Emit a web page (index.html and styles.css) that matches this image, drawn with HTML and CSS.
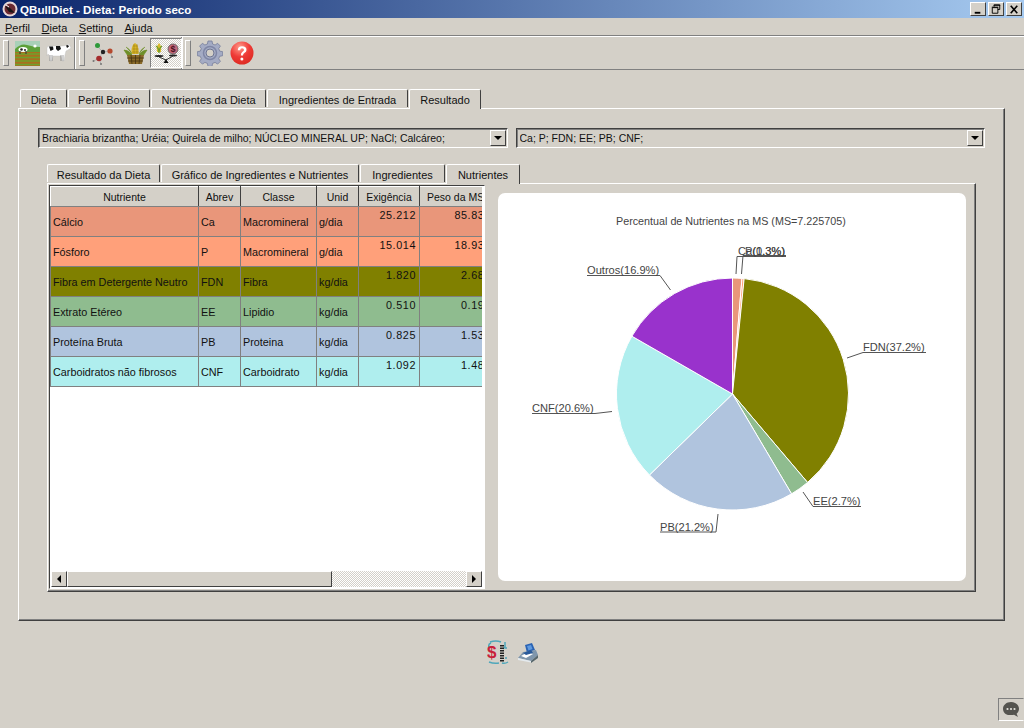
FILE: index.html
```html
<!DOCTYPE html>
<html lang="pt">
<head>
<meta charset="utf-8">
<title>QBullDiet</title>
<link rel="stylesheet" href="styles.css">
</head>
<body>
<div class="window">
  <header class="titlebar">
    <svg class="app-logo" width="16" height="16" viewBox="0 0 16 16"><circle cx="8" cy="8" r="7.500" fill="#e8d8d8"/><circle cx="8" cy="8" r="5.500" fill="#6b2a33"/><path d="M3 5l5 2 5 5-6-1z" fill="#1c1416"/><path d="M4 4l3 2" stroke="#fff" stroke-width="1"/></svg>
    <span class="title-text">QBullDiet - Dieta: Periodo seco</span>
    <div class="winbtns">
      <span class="winbtn"><svg width="15" height="13" viewBox="0 0 15 13"><rect x="4" y="9" width="6" height="2" fill="#000"/></svg></span>
      <span class="winbtn"><svg width="15" height="13" viewBox="0 0 15 13"><path d="M5.500 3.500V1.500h6v5h-2M3.500 4.500h6v6h-6z" fill="none" stroke="#000"/><path d="M3 4h7M5 2h7" stroke="#000"/></svg></span>
      <span class="winbtn winbtn-close"><svg width="15" height="13" viewBox="0 0 15 13"><path d="M4 2.500l7 8M11 2.500l-7 8" stroke="#000" stroke-width="1.700"/></svg></span>
    </div>
  </header>

  <nav class="menubar">
    <span class="menu-item"><u>P</u>erfil</span>
    <span class="menu-item"><u>D</u>ieta</span>
    <span class="menu-item"><u>S</u>etting</span>
    <span class="menu-item"><u>A</u>juda</span>
  </nav>

  <div class="toolbar">
    <div class="tool-group group-a">
      <span class="handle"></span>
      <svg class="ticon" width="25" height="25" viewBox="0 0 25 25"><rect width="25" height="8" fill="#a8d0b8"/><path d="M0 8q6-6 12-4t13 2v5H0z" fill="#5da03a"/><rect y="11" width="25" height="14" fill="#a8701f"/><path d="M0 13h25M0 16.500h25M0 20h25M0 23.500h25" stroke="#6fa02c" stroke-width="1.600"/><ellipse cx="8" cy="8.500" rx="4.500" ry="2.500" fill="#fff"/><circle cx="6.500" cy="8.500" r="1.300" fill="#222"/><circle cx="10" cy="9" r="1" fill="#222"/><path d="M5 10v3M11 10v3" stroke="#333"/><circle cx="20" cy="5" r="1.600" fill="#fff"/></svg>
      <svg class="ticon cow" width="26" height="18" viewBox="0 0 26 18"><path d="M1 4q0-2 3-2h12q3 0 5-1l2-1 1 2 1 2-3 2-2 1-1 4-1 6h-2l-1-5H7l-1 5H4l-1-6-1-1-1 2z" fill="#fff" stroke="#bbb" stroke-width=".4"/><path d="M3 2.500h4l.5 3-3 1.500zM10 2h4l1 3-3 2-2-2zM20 1.500l2-.5 1 1.500-2 1.500z" fill="#151515"/><path d="M4 11v6M6 11v6M15 11v6M17 11v6" stroke="#666" stroke-width=".6"/></svg>
    </div>
    <div class="tool-group group-b">
      <span class="handle"></span>
      <svg class="ticon" width="26" height="25" viewBox="0 0 26 25"><path d="M7 6l5 5M12 11l7-1M12 11l-4 6M8 17l-5 3M19 10l2 6M8 17l2 6" stroke="#aaa" stroke-width=".8"/><circle cx="6.500" cy="4.500" r="2.500" fill="#2f9a3a"/><circle cx="12" cy="11" r="2.200" fill="#222"/><circle cx="19" cy="10" r="2.600" fill="#b5492e"/><circle cx="8" cy="17.500" r="2.800" fill="#a52c2c"/><circle cx="2.500" cy="20" r="1" fill="#777"/><circle cx="21" cy="16" r="1" fill="#777"/><circle cx="10" cy="23" r="1" fill="#777"/></svg>
      <svg class="ticon corn-icon" width="25" height="25" viewBox="0 0 25 25"><path d="M12 2c3 2 4 6 3.500 11h-7C8 8 9 4 12 2z" fill="#d8b62a"/><path d="M10 5h5M9.500 8h6M9 11h7M11 3v10M14 3v10" stroke="#9a7a12" stroke-width=".5"/><path d="M1 9q5 0 8 5l-4 1zM24 9q-5 0-8 5l4 1zM3 6q4 2 6 7M22 6q-4 2-6 7" fill="#6f8f28" stroke="#6f8f28" stroke-width=".7"/><path d="M4 14h17l-2 9H6z" fill="#8a6a28"/><path d="M4 17h17M5 20h15M8 14l1 9M12.500 14v9M17 14l-1 9" stroke="#453212" stroke-width=".8"/></svg>
      <span class="tool-active">
        <svg width="26" height="25" viewBox="0 0 26 25"><path d="M6 2q3 3 2 9H4q-1-6 2-9z" fill="#d9bb2b"/><path d="M3 5q3 2 3 7M9 5q-3 2-3 7" stroke="#6f9a2a" stroke-width="1.300" fill="none"/><ellipse cx="6" cy="15" rx="4.500" ry="1" fill="#222"/><circle cx="20" cy="8" r="5" fill="#c56a7c" stroke="#555" stroke-width=".8"/><text class="dollar-mini" x="20" y="11">$</text><ellipse cx="20" cy="14.500" rx="4" ry="1" fill="#222"/><path d="M6 16l7 3 7-4" stroke="#333" fill="none"/><path d="M13 18l-2.500 4h5z" fill="#111"/></svg>
      </span>
    </div>
    <div class="tool-group group-c">
      <span class="handle"></span>
      <svg class="ticon" width="26" height="26" viewBox="0 0 26 26"><path d="M11 1h4l.6 3 2.500 1 2.500-1.700 2.800 2.800-1.700 2.500 1 2.500 3 .6v4l-3 .6-1 2.500 1.700 2.500-2.800 2.800-2.500-1.700-2.500 1-.6 3h-4l-.6-3-2.500-1-2.500 1.700-2.800-2.800 1.700-2.500-1-2.500-3-.6v-4l3-.6 1-2.500-1.700-2.500 2.800-2.800 2.500 1.700 2.500-1z" fill="#a4abc4" stroke="#767d9a" stroke-width=".8"/><circle cx="13" cy="13" r="6.500" fill="none" stroke="#7f86a5" stroke-width="1.500"/><circle cx="13" cy="13" r="4" fill="#d4d0c8" stroke="#6f7693"/></svg>
      <svg class="ticon help-icon" width="24" height="24" viewBox="0 0 24 24"><defs><radialGradient id="helpg" cx=".4" cy=".25" r=".85"><stop offset="0" stop-color="#ff9a8a"/><stop offset=".5" stop-color="#ee3a36"/><stop offset="1" stop-color="#d9281e"/></radialGradient></defs><circle cx="12" cy="12" r="11.500" fill="url(#helpg)"/><path d="M7.800 9.200q0-4 4.300-4 4.400 0 4.400 3.700 0 2-2.200 3.200-1.300.7-1.300 2.400h-2.200q0-2.700 1.700-3.800 1.500-1 1.500-1.800 0-1.600-1.900-1.600-1.900 0-2 2z" fill="#fff"/><circle cx="11.900" cy="18" r="1.500" fill="#fff"/></svg>
    </div>
  </div>

  <main class="content">
    <div class="tabs outer-tabs">
      <span class="tab t-dieta">Dieta</span>
      <span class="tab t-perfil">Perfil Bovino</span>
      <span class="tab t-nutr">Nutrientes da Dieta</span>
      <span class="tab t-ingr">Ingredientes de Entrada</span>
      <span class="tab tab-active t-res">Resultado</span>
    </div>
    <section class="pane outer-pane">
      <div class="combos">
        <div class="combo"><span class="combo-text">Brachiaria brizantha; Uréia; Quirela de milho; NÚCLEO MINERAL UP; NaCl; Calcáreo;</span><span class="combo-btn"><i class="arrow-down"></i></span></div>
        <div class="combo"><span class="combo-text">Ca; P; FDN; EE; PB; CNF;</span><span class="combo-btn"><i class="arrow-down"></i></span></div>
      </div>
      <div class="tabs inner-tabs">
        <span class="tab t-rd">Resultado da Dieta</span>
        <span class="tab t-gr">Gráfico de Ingredientes e Nutrientes</span>
        <span class="tab t-in">Ingredientes</span>
        <span class="tab tab-active t-nu">Nutrientes</span>
      </div>
      <section class="pane inner-pane">
        <div class="table-box">
          <div class="table-clip">
            <table class="grid">
              <colgroup><col class="c1"><col class="c2"><col class="c3"><col class="c4"><col class="c5"><col class="c6"></colgroup>
              <thead><tr><th>Nutriente</th><th>Abrev</th><th>Classe</th><th>Unid</th><th>Exigência</th><th>Peso da MS</th></tr></thead>
              <tbody>
                <tr class="r-ca"><td>Cálcio</td><td>Ca</td><td>Macromineral</td><td>g/dia</td><td class="num">25.212</td><td class="num">85.832</td></tr>
                <tr class="r-p"><td>Fósforo</td><td>P</td><td>Macromineral</td><td>g/dia</td><td class="num">15.014</td><td class="num">18.939</td></tr>
                <tr class="r-fdn"><td>Fibra em Detergente Neutro</td><td>FDN</td><td>Fibra</td><td>kg/dia</td><td class="num">1.820</td><td class="num">2.688</td></tr>
                <tr class="r-ee"><td>Extrato Etéreo</td><td>EE</td><td>Lipidio</td><td>kg/dia</td><td class="num">0.510</td><td class="num">0.192</td></tr>
                <tr class="r-pb"><td>Proteína Bruta</td><td>PB</td><td>Proteina</td><td>kg/dia</td><td class="num">0.825</td><td class="num">1.530</td></tr>
                <tr class="r-cnf"><td>Carboidratos não fibrosos</td><td>CNF</td><td>Carboidrato</td><td>kg/dia</td><td class="num">1.092</td><td class="num">1.487</td></tr>
              </tbody>
            </table>
          </div>
          <div class="hscroll">
            <span class="sb-btn"><i class="arrow-left"></i></span>
            <span class="sb-thumb"></span>
            <span class="sb-track"></span>
            <span class="sb-btn"><i class="arrow-right"></i></span>
          </div>
        </div>
        <div class="chart-card">
          <svg class="chart" width="468" height="388" viewBox="0 0 468 388">
            <text class="chart-title" x="118" y="32">Percentual de Nutrientes na MS (MS=7.225705)</text>
            <g class="slices">
              <path fill="#E9967A" d="M234.500 201L234.500 85A116 116 0 0 1 243.960 85.400Z"/>
              <path fill="#FFA07A" d="M234.500 201L243.960 85.400A116 116 0 0 1 246.150 85.580Z"/>
              <path fill="#808000" d="M234.500 201L246.150 85.580A116 116 0 0 1 309.550 289.450Z"/>
              <path fill="#8FBC8F" d="M234.500 201L309.550 289.450A116 116 0 0 1 293.550 300.850Z"/>
              <path fill="#B0C4DE" d="M234.500 201L293.550 300.850A116 116 0 0 1 151.450 282Z"/>
              <path fill="#AFEEEE" d="M234.500 201L151.450 282A116 116 0 0 1 133.900 143.200Z"/>
              <path fill="#9932CC" d="M234.500 201L133.900 143.200A116 116 0 0 1 234.500 85Z"/>
            </g>
            <g class="leaders">
              <path d="M89 82.500H162L172.500 97"/>
              <path d="M239 63.500H288M239 63.500L238 81"/>
              <path d="M245 62.500H288M245 62.500L243.500 81"/>
              <path d="M365 159.500H428M365 159.500L349 165"/>
              <path d="M315 313.500H363M315 313.500L305 299"/>
              <path d="M162 339H218L220 321"/>
              <path d="M34 220.500H97L114 218.500"/>
            </g>
            <g class="labels">
              <text x="89" y="81">Outros(16.9%)</text>
              <text x="240" y="62">Ca(1.3%)</text>
              <text x="247" y="62">P(0.3%)</text>
              <text x="365" y="158">FDN(37.2%)</text>
              <text x="315" y="312">EE(2.7%)</text>
              <text x="162" y="337.500">PB(21.2%)</text>
              <text x="34" y="219">CNF(20.6%)</text>
            </g>
          </svg>
        </div>
      </section>
    </section>
    <div class="actions">
      <svg width="22" height="25" viewBox="0 0 22 25"><path d="M4 3q-3 1-2 4M3 2q6-2 11 0M18 2v5l-2 2M2 22q5 2 10 1M15 23q3 1 6-1" stroke="#4fa7bb" fill="none" stroke-width="1.500"/><text class="dollar" x="0" y="18">$</text><path d="M15 5v17" stroke="#222" stroke-width="4" stroke-dasharray="1.500 1"/><circle cx="19" cy="8" r="1" fill="#4fa7bb"/><circle cx="19" cy="18" r="1" fill="#4fa7bb"/></svg>
      <svg width="22" height="20" viewBox="0 0 22 20"><path d="M8 2l7-2 3 7-8 3z" fill="#2a63b4"/><path d="M10 3l4-1 1.500 4-4 1.500z" fill="#5f9ae0"/><path d="M1 15l5-6 13-2 2 5-7 6z" fill="#7f96ac"/><path d="M1 15l13 3v1.500L1 17z" fill="#e4eaee"/><path d="M14 18l7-6v3l-7 5z" fill="#56666c"/><path d="M4 13l7-4 5 2-7 4z" fill="#fff"/><path d="M6 10l8-3 2 3-7 2z" fill="#2a5a9a"/></svg>
    </div>
    <div class="status-row">
      <span class="chat-btn"><svg width="18" height="18" viewBox="0 0 18 18"><path d="M9 1c4.400 0 8 2.800 8 6.800 0 2-.9 3.700-2.400 4.900l1.400 3.300-4-2.300c-1 .2-1.900.3-3 .2C4.500 14.900 1 12 1 7.800 1 3.800 4.600 1 9 1z" fill="#55544f"/><circle cx="5.500" cy="8" r="1.100" fill="#e5e3dd"/><circle cx="9" cy="8" r="1.100" fill="#e5e3dd"/><circle cx="12.500" cy="8" r="1.100" fill="#e5e3dd"/></svg></span>
    </div>
  </main>
</div>
</body>
</html>
```
FILE: styles.css
```css
* { box-sizing: border-box; }
html, body { margin: 0; padding: 0; }
body {
  background: #d4d0c8;
  color: #111;
  font: 11px "Liberation Sans", "Noto Sans", sans-serif;
  overflow: hidden;
}
.window { width: 1024px; height: 728px; display: flex; flex-direction: column; overflow: hidden; }

.titlebar {
  height: 18px;
  display: flex;
  align-items: center;
  padding: 0 2px;
  background: linear-gradient(90deg, #0a246a 0%, #a6caf0 100%);
  color: #fff;
}
.app-logo { flex: none; }
.title-text { margin-left: 2px; font-weight: 700; font-size: 11.600px; white-space: nowrap; }
.winbtns { margin-left: auto; display: flex; gap: 2px; }
.winbtn {
  width: 16px; height: 14px;
  background: #d4d0c8;
  border: 1px solid;
  border-color: #fff #404040 #404040 #fff;
  display: flex; align-items: center; justify-content: center;
  overflow: hidden;
}

.menubar {
  height: 18px;
  display: flex;
  align-items: center;
  padding: 3px 0 0 5px;
  gap: 11.500px;
  border-bottom: 1px solid #808080;
  font-size: 11px;
}

.toolbar {
  height: 34px;
  display: flex;
  border-top: 1px solid #fff;
  border-bottom: 1px solid #808080;
}
.tool-group { display: flex; align-items: center; border-right: 1px solid #808080; box-shadow: 1px 0 0 #fff; padding-left: 3px; }
.group-a { width: 75px; }
.group-b { width: 106px; margin-left: 1px; }
.group-c { border-right: 0; box-shadow: none; padding-left: 3px; }
.handle {
  width: 6px; height: 26px; flex: none;
  background: #d4d0c8;
  border: 1px solid;
  border-color: #fff #808080 #808080 #fff;
  margin-right: 6px;
}
.ticon { flex: none; }
.cow { margin-left: 6px; }
.corn-icon { margin-left: 6px; }
.help-icon { margin-left: 7px; }
.tool-active {
  width: 32px; height: 30px; flex: none;
  margin-left: 2px;
  display: flex; align-items: center; justify-content: center;
  border: 1px solid;
  border-color: #808080 #fff #fff #808080;
  background: repeating-conic-gradient(#fff 0 25%, #d4d0c8 0 50%) 0 0 / 2px 2px;
}
.dollar-mini { font: 700 9px "Liberation Sans", sans-serif; fill: #4a1020; text-anchor: middle; }

.content { flex: 1; min-height: 0; display: flex; flex-direction: column; padding: 18px 19px 0 18px; }

.tabs { display: flex; align-items: flex-end; flex: none; position: relative; z-index: 1; }
.outer-tabs { height: 20px; padding-left: 2px; gap: 1px; }
.inner-tabs { height: 19px; gap: 1px; margin-top: 16px; margin-left: 9px; }
.tab {
  height: 18px;
  display: flex; align-items: center; justify-content: center;
  background: #d4d0c8;
  border-top: 1px solid #fff;
  border-left: 1px solid #fff;
  border-right: 1px solid #404040;
  border-radius: 2px 2px 0 0;
  white-space: nowrap;
  padding-top: 3px;
  margin-bottom: 1px;
  font-size: 11px;
}
.tabs .tab-active { height: 20px; margin-bottom: -1px; padding-top: 0; padding-bottom: 0; z-index: 2; }
.t-dieta { width: 47px; }
.t-perfil { width: 82px; }
.t-nutr { width: 115px; }
.t-ingr { width: 141px; }
.t-res { width: 72px; }
.t-rd { width: 113px; }
.t-gr { width: 198px; }
.t-in { width: 85px; }
.t-nu { width: 74px; }

.pane {
  background: #d4d0c8;
  border: 1px solid;
  border-color: #fff #404040 #404040 #fff;
  box-shadow: inset -1px -1px 0 #808080;
}
.outer-pane { height: 513px; padding: 19px 19px 0 19px; display: flex; flex-direction: column; }
.combos { display: flex; gap: 8px; flex: none; }
.combo {
  flex: 1; height: 20px;
  display: flex; align-items: center;
  background: #d4d0c8;
  border: 1px solid;
  border-color: #404040 #fff #fff #404040;
  box-shadow: inset 1px 1px 0 #808080;
  padding: 0 1px 0 3px;
}
.combo-text { flex: 1; white-space: nowrap; overflow: hidden; font-size: 10.500px; }
.combo-btn {
  width: 16px; height: 16px; flex: none;
  border: 1px solid;
  border-color: #fff #404040 #404040 #fff;
  display: flex; align-items: center; justify-content: center;
}
.arrow-down { width: 0; height: 0; border: 4px solid transparent; border-top: 4px solid #000; border-bottom: 0; }
.arrow-left { width: 0; height: 0; border: 4px solid transparent; border-right: 4px solid #000; border-left: 0; }
.arrow-right { width: 0; height: 0; border: 4px solid transparent; border-left: 4px solid #000; border-right: 0; }

.inner-pane {
  margin: 0 9px;
  height: 409px;
  display: flex; gap: 13px;
  padding: 1px;
  flex: none;
}
.table-box {
  width: 436px; height: 404px; flex: none;
  background: #fff;
  display: flex; flex-direction: column;
  border: 1px solid;
  border-color: #404040 #fff #fff #404040;
  padding: 0 2px 1px 0;
}
.table-clip { flex: 1; min-height: 0; overflow: hidden; }
.grid { table-layout: fixed; width: 444px; border-collapse: collapse; }
.c1 { width: 148px; } .c2 { width: 42px; } .c3 { width: 76px; } .c4 { width: 42px; } .c5 { width: 61px; } .c6 { width: 75px; }
.grid th {
  height: 20px;
  font-weight: 400;
  background: #d4d0c8;
  border: 1px solid;
  border-color: #fff #404040 #808080 #fff;
  padding: 0;
  font-size: 10.500px;
}
.grid th:last-child { text-align: left; padding-left: 7px; }
.grid td {
  height: 30px;
  border: 1px solid #808080;
  padding: 0 2px;
  white-space: nowrap;
  overflow: hidden;
  font-size: 10.800px;
}
.grid td.num { vertical-align: top; text-align: right; letter-spacing: .6px; padding: 2px 3px 0 0; }
.r-ca { background: #e9967a; }
.r-p { background: #ffa07a; }
.r-fdn { background: #808000; }
.r-ee { background: #8fbc8f; }
.r-pb { background: #b0c4de; }
.r-cnf { background: #afeeee; }

.hscroll { height: 16px; flex: none; display: flex; margin: 0 0 0 1px; }
.sb-btn {
  width: 16px; height: 16px; flex: none;
  background: #d4d0c8;
  border: 1px solid;
  border-color: #fff #404040 #404040 #fff;
  display: flex; align-items: center; justify-content: center;
}
.sb-thumb {
  width: 265px; flex: none;
  background: #d4d0c8;
  border: 1px solid;
  border-color: #fff #404040 #404040 #fff;
}
.sb-track { flex: 1; background: repeating-conic-gradient(#fff 0 25%, #d4d0c8 0 50%) 0 0 / 2px 2px; }

.chart-card {
  width: 468px; height: 388px; flex: none;
  margin-top: 8px;
  background: #fff;
  border-radius: 7px;
  overflow: hidden;
}
.chart { display: block; }
.chart-title { font: 10.750px "Liberation Sans", sans-serif; fill: #444; }
.slices path { stroke: #fff; stroke-width: 1; }
.leaders path { fill: none; stroke: #555; stroke-width: 1; }
.labels text { font: 11.100px "Liberation Sans", sans-serif; fill: #444; }

.actions { flex: none; display: flex; justify-content: center; gap: 8px; align-items: center; margin-top: 19px; height: 25px; padding-left: 3px; }
.actions svg { display: block; }
.dollar { font: 700 17px "Liberation Sans", sans-serif; fill: #c8203a; }

.status-row { flex: 1; display: flex; justify-content: flex-end; align-items: flex-start; margin-right: -19px; padding-top: 33px; }
.chat-btn {
  width: 26px; height: 23px;
  display: flex; align-items: center; justify-content: center;
  border: 1px solid;
  border-color: #808080 transparent #fff #808080;
}
```
